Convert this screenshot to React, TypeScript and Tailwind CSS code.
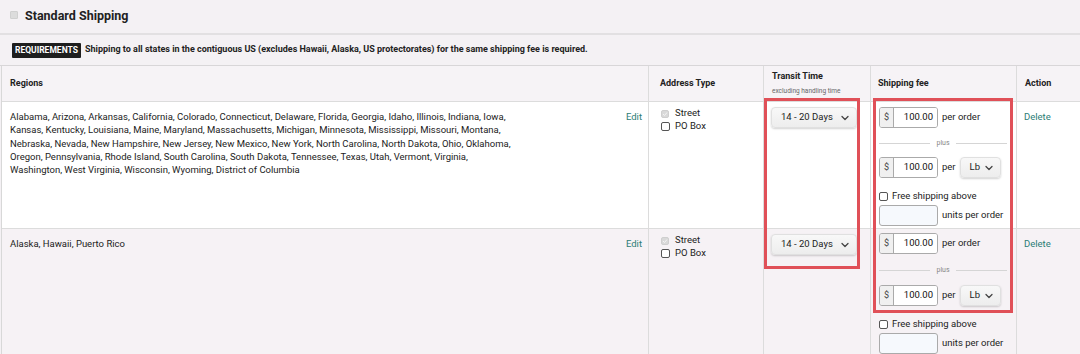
import React from "react";

const font = { fontFamily: "Roboto, 'Noto Sans', Arial, sans-serif" };

function Chevron() {
  return (
    <svg width="8" height="6" viewBox="0 0 8 6" className="shrink-0">
      <path d="M1 1.5 L4 4.5 L7 1.5" fill="none" stroke="#444" strokeWidth="1.3" strokeLinecap="round" strokeLinejoin="round" />
    </svg>
  );
}

function DisabledCheck() {
  return (
    <div className="w-[8px] h-[8px] rounded-[2px] bg-[#d9d9d9] border border-[#cfcfcf] flex items-center justify-center">
      <svg width="6" height="6" viewBox="0 0 6 6">
        <path d="M1 3 L2.5 4.5 L5 1.5" fill="none" stroke="#f4f4f4" strokeWidth="1" />
      </svg>
    </div>
  );
}

function EmptyCheck() {
  return <div className="w-[9px] h-[9px] rounded-[2px] bg-white border border-[#555]" />;
}

function Select({ label, w }: { label: string; w: string }) {
  return (
    <div
      className={`${w} h-[21px] rounded-[4px] bg-gradient-to-b from-[#f8f8f8] to-[#ededed] border border-[#e0e0e0] shadow-[0_1px_2px_rgba(0,0,0,0.18)] flex items-center justify-between pl-[9px] pr-[7px] text-[9.5px] text-[#222]`}
    >
      <span>{label}</span>
      <Chevron />
    </div>
  );
}

function MoneyInput() {
  return (
    <div className="flex h-[21px] w-[59px] rounded-[3px] border border-[#aaa] overflow-hidden">
      <div className="w-[14px] bg-[#f0f0f0] border-r border-[#aaa] flex items-center justify-center text-[9px] text-[#444]">$</div>
      <div className="flex-1 bg-white flex items-center justify-end pr-[4px] text-[9.5px] text-[#111]">100.00</div>
    </div>
  );
}

function FeeCell({ pt, plusH }: { pt: string; plusH: string }) {
  return (
    <div className={`${pt} pl-[8px] pr-[9px] text-[9.5px] text-[#222]`}>
      <div className="flex items-center h-[21px] gap-[4px]">
        <MoneyInput />
        <span>per order</span>
      </div>
      <div className={`${plusH} flex items-center pt-[2px]`}>
        <div className="flex-1 h-px bg-[#d5d5d5]" />
        <span className="px-[6px] text-[7px] text-[#888]">plus</span>
        <div className="flex-1 h-px bg-[#d5d5d5]" />
      </div>
      <div className="flex items-center h-[21px] gap-[4px]">
        <MoneyInput />
        <span>per</span>
        <Select label="Lb" w="w-[41px]" />
      </div>
      <div className="h-[27px] pt-[9px] flex items-center gap-[4px]">
        <EmptyCheck />
        <span>Free shipping above</span>
      </div>
      <div className="flex items-center h-[21px] gap-[4px]">
        <div className="w-[59px] h-[21px] rounded-[3px] border border-[#aaa] bg-[#f6f9fd]" />
        <span>units per order</span>
      </div>
    </div>
  );
}

function AddressCell({ pt }: { pt: string }) {
  return (
    <div className={`${pt} pl-[12px] text-[9.5px] text-[#222] border-l border-[#dcdcdc]`}>
      <div className="flex items-center gap-[6px] h-[13px]">
        <DisabledCheck />
        <span>Street</span>
      </div>
      <div className="flex items-center gap-[5px] h-[13px]">
        <EmptyCheck />
        <span>PO Box</span>
      </div>
    </div>
  );
}

const regionLines = [
  "Alabama, Arizona, Arkansas, California, Colorado, Connecticut, Delaware, Florida, Georgia, Idaho, Illinois, Indiana, Iowa,",
  "Kansas, Kentucky, Louisiana, Maine, Maryland, Massachusetts, Michigan, Minnesota, Mississippi, Missouri, Montana,",
  "Nebraska, Nevada, New Hampshire, New Jersey, New Mexico, New York, North Carolina, North Dakota, Ohio, Oklahoma,",
  "Oregon, Pennsylvania, Rhode Island, South Carolina, South Dakota, Tennessee, Texas, Utah, Vermont, Virginia,",
  "Washington, West Virginia, Wisconsin, Wyoming, District of Columbia",
];

const cols = "grid grid-cols-[646px_115px_107px_146px_1fr]";

export default function App() {
  return (
    <div className="w-[1080px] h-[354px] overflow-hidden bg-[#f4f1f4] text-[#111]" style={font}>
      {/* Title */}
      <div className="h-[35px] flex items-center pl-[10px] gap-[7px] border-b-2 border-[#e2e0e2]">
        <div className="w-[8px] h-[8px] rounded-[1px] bg-[#dcdcdc] border border-[#d0d0d0] -mt-[4px]" />
        <span className="text-[12.5px] font-bold text-[#222]">Standard Shipping</span>
      </div>
      {/* Requirements */}
      <div className="h-[31px] flex items-center pl-[12px] gap-[4px] border-b border-[#d8d6d8]">
        <span className="bg-[#1e1e1e] text-white text-[8.5px] font-bold h-[15px] px-[3px] flex items-center rounded-[1px]">REQUIREMENTS</span>
        <span className="text-[9px] font-bold text-[#222]">
          Shipping to all states in the contiguous US (excludes Hawaii, Alaska, US protectorates) for the same shipping fee is required.
        </span>
      </div>
      {/* Table */}
      <div className="relative border-l border-[#d8d8d8] ml-[1px]">
        {/* Header */}
        <div className={`${cols} h-[36px] bg-[#f6f3f6] border-b border-[#dcdcdc] text-[9px] font-bold text-[#222]`}>
          <div className="pl-[8px] flex items-center">Regions</div>
          <div className="pl-[11px] flex items-center border-l border-[#dcdcdc]">Address Type</div>
          <div className="pl-[8px] flex flex-col justify-center border-l border-[#dcdcdc]">
            <span>Transit Time</span>
            <span className="text-[6.5px] font-normal text-[#666] mt-[3px]">excluding handling time</span>
          </div>
          <div className="pl-[7px] flex items-center border-l border-[#dcdcdc]">Shipping fee</div>
          <div className="pl-[8px] flex items-center border-l border-[#dcdcdc]">Action</div>
        </div>
        {/* Row 1 */}
        <div className={`${cols} h-[127px] bg-white border-b border-[#dcdcdc]`}>
          <div className="pl-[8px] pr-[6px] pt-[8px] flex justify-between text-[9.5px] leading-[13.3px] text-[#222]">
            <div>
              {regionLines.map((l) => (
                <div key={l} className="whitespace-nowrap">{l}</div>
              ))}
            </div>
            <span className="text-[#2b7d75]">Edit</span>
          </div>
          <AddressCell pt="pt-[5px]" />
          <div className="pt-[5px] pl-[7px] border-l border-[#dcdcdc]">
            <Select label="14 - 20 Days" w="w-[86px]" />
          </div>
          <div className="border-l border-[#dcdcdc]">
            <FeeCell pt="pt-[5px]" plusH="h-[29px]" />
          </div>
          <div className="pl-[7px] pt-[8px] text-[9.5px] leading-[13.3px] text-[#2b7d75] border-l border-[#dcdcdc]">Delete</div>
        </div>
        {/* Row 2 */}
        <div className={`${cols} h-[140px] bg-[#f6f2f5]`}>
          <div className="pl-[8px] pr-[6px] pt-[8px] flex justify-between text-[9.5px] leading-[13.3px] text-[#222]">
            <div>Alaska, Hawaii, Puerto Rico</div>
            <span className="text-[#2b7d75]">Edit</span>
          </div>
          <AddressCell pt="pt-[5px]" />
          <div className="pt-[5px] pl-[7px] border-l border-[#dcdcdc]">
            <Select label="14 - 20 Days" w="w-[86px]" />
          </div>
          <div className="border-l border-[#dcdcdc]">
            <FeeCell pt="pt-[4px]" plusH="h-[31px]" />
          </div>
          <div className="pl-[7px] pt-[8px] text-[9.5px] leading-[13.3px] text-[#2b7d75] border-l border-[#dcdcdc]">Delete</div>
        </div>
        {/* Annotation boxes */}
        <div className="absolute left-[762px] top-[32px] w-[96px] h-[171px] border-[3px] border-[#e05058] pointer-events-none" />
        <div className="absolute left-[871px] top-[32px] w-[140px] h-[215px] border-[3px] border-[#e05058] pointer-events-none" />
      </div>
    </div>
  );
}
